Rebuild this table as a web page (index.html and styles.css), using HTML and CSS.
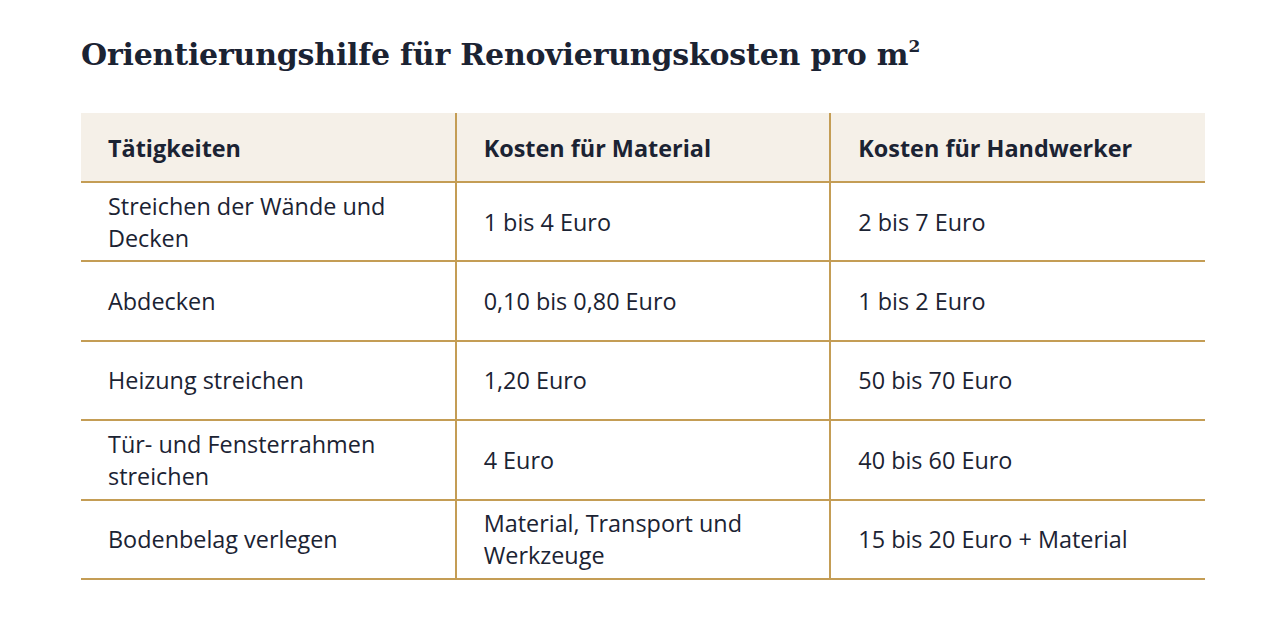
FILE: index.html
```html
<!DOCTYPE html>
<html lang="de">
<head>
<meta charset="utf-8">
<title>Orientierungshilfe</title>
<link rel="stylesheet" href="styles.css">
</head>
<body>
<main class="page">
  <h1 class="title">Orientierungshilfe für Renovierungskosten pro m<sup>2</sup></h1>
  <table class="costs">
    <thead>
      <tr>
        <th>Tätigkeiten</th>
        <th>Kosten für Material</th>
        <th>Kosten für Handwerker</th>
      </tr>
    </thead>
    <tbody>
      <tr><td>Streichen der Wände und Decken</td><td>1 bis 4 Euro</td><td>2 bis 7 Euro</td></tr>
      <tr><td>Abdecken</td><td>0,10 bis 0,80 Euro</td><td>1 bis 2 Euro</td></tr>
      <tr><td>Heizung streichen</td><td>1,20 Euro</td><td>50 bis 70 Euro</td></tr>
      <tr><td>Tür- und Fensterrahmen streichen</td><td>4 Euro</td><td>40 bis 60 Euro</td></tr>
      <tr><td>Bodenbelag verlegen</td><td>Material, Transport und Werkzeuge</td><td>15 bis 20 Euro + Material</td></tr>
    </tbody>
  </table>
</main>
</body>
</html>
```

FILE: styles.css
```css
html, body {
  margin: 0;
  padding: 0;
  background: #ffffff;
}
.page {
  padding: 33px 75px 0 81px;
  color: #1b2333;
}
.title {
  margin: 0 0 36px 0;
  font-family: "DejaVu Serif", "Liberation Serif", serif;
  font-weight: 600;
  font-size: 30px;
  line-height: 44px;
  color: #1b2333;
  letter-spacing: -0.2px;
}
.title sup {
  font-size: 17px;
  line-height: 0;
  vertical-align: 13px;
}
.costs {
  width: 1124px;
  border-collapse: collapse;
  table-layout: fixed;
  font-family: "Open Sans", "Noto Sans", sans-serif;
  font-size: 23.4px;
  line-height: 32px;
  color: #1b2333;
}
.costs th, .costs td {
  text-align: left;
  padding: 0 30px 0 27px;
  border-bottom: 2px solid #c49d55;
  border-left: 2px solid #c49d55;
  vertical-align: middle;
}
.costs th:first-child, .costs td:first-child {
  border-left: none;
}
.costs thead tr {
  height: 69px;
}
.costs th {
  background: #f5f0e8;
  font-weight: 700;
  padding-top: 2px;
}
.costs td {
  font-weight: 400;
}
.costs tbody tr {
  height: 79.4px;
}
```
